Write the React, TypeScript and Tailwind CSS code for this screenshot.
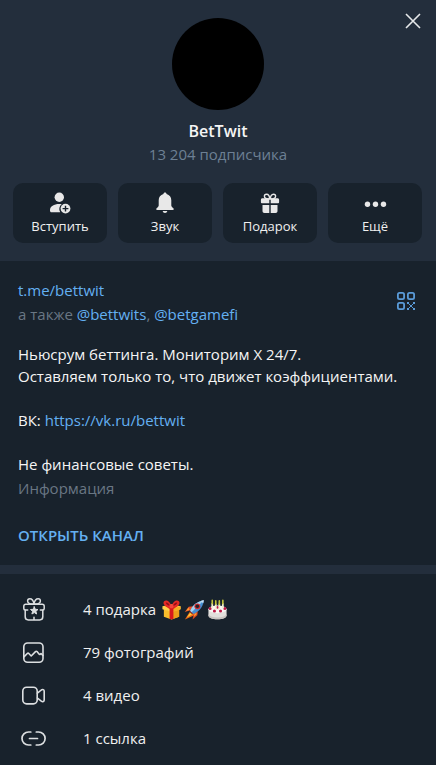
import type { ReactNode } from "react";

type Action = {
  label: string;
  icon: ReactNode;
};

type MediaRow = {
  label: string;
  icon: ReactNode;
  extra?: ReactNode;
};

function CloseIcon() {
  return (
    <svg width="16" height="16" viewBox="0 0 16 16" fill="none" stroke="#e6e8ea" strokeWidth="1.6" aria-hidden="true">
      <path d="M1 1 15 15M15 1 1 15" />
    </svg>
  );
}

function JoinIcon() {
  return (
    <svg width="24" height="24" viewBox="0 0 24 24" fill="#e8e8e8" aria-hidden="true">
      <circle cx="11.3" cy="6.3" r="4.7" />
      <path d="M2 19.8v-.8c0-3.7 4-6.1 9.2-6.1.9 0 1.700.05 2.500.2a6.200 6.200 0 0 0-1.500 8.200H3.500c-.9 0-1.500-.6-1.500-1.500Z" />
      <circle cx="17.500" cy="17.600" r="4.900" />
      <path d="M17.500 14.700v5.800M14.600 17.600h5.800" stroke="#18222c" strokeWidth="1.400" />
    </svg>
  );
}

function BellIcon() {
  return (
    <svg width="24" height="24" viewBox="0 0 24 24" fill="#e8e8e8" aria-hidden="true">
      <path d="M12 1.500c.9 0 1.500.6 1.600 1.500 2.900.8 4.700 3.200 4.700 6.200v5c0 1 .5 1.600 1.400 2.500l.6.600c.9.800.6 1.700-.6 1.700H4.300c-1.200 0-1.500-.9-.6-1.700l.6-.6c.9-.9 1.400-1.500 1.400-2.500v-5c0-3 1.800-5.400 4.700-6.200C10.500 2.100 11.100 1.500 12 1.500Z" />
      <path d="M9.700 20h4.600c-.2 1.200-1.100 2-2.300 2s-2.100-.8-2.300-2Z" />
    </svg>
  );
}

function GiftIcon() {
  return (
    <svg width="24" height="24" viewBox="0 0 24 24" fill="#e8e8e8" aria-hidden="true">
      <path
        d="M11.600 8C8 8 6.400 6.700 6.400 5.200c0-1.200.9-2 2.100-2 1.700 0 3.100 1.800 3.100 4.800Zm.8 0c3.600 0 5.200-1.300 5.200-2.800 0-1.200-.9-2-2.100-2-1.700 0-3.100 1.800-3.100 4.800Z"
        fill="none"
        stroke="#e8e8e8"
        strokeWidth="1.400"
      />
      <path d="M4.500 7.200h6.800v5H3.800c-.6 0-.9-.4-.9-.9V8.800c0-1 .6-1.600 1.600-1.600ZM12.700 7.200h6.800c1 0 1.600.6 1.600 1.600v2.500c0 .5-.3.900-.9.900h-7.500v-5Z" />
      <path d="M4.500 14h6.800v8H6.400c-1.200 0-1.900-.7-1.900-1.900V14ZM12.700 14h6.800v6.100c0 1.200-.7 1.900-1.900 1.900h-4.900v-8Z" />
    </svg>
  );
}

function MoreIcon() {
  return (
    <svg width="24" height="24" viewBox="0 0 24 24" fill="#e8e8e8" aria-hidden="true">
      <circle cx="4.500" cy="13.300" r="2.700" />
      <circle cx="12.500" cy="13.300" r="2.700" />
      <circle cx="20.500" cy="13.300" r="2.700" />
    </svg>
  );
}

function QrIcon() {
  return (
    <svg width="18" height="18" viewBox="0 0 18 18" fill="none" stroke="#5a9bd8" strokeWidth="1.800" aria-hidden="true">
      <rect x="0.900" y="0.900" width="6.200" height="6.200" rx="1.600" />
      <rect x="10.900" y="0.900" width="6.200" height="6.200" rx="1.600" />
      <rect x="0.900" y="10.900" width="6.200" height="6.200" rx="1.600" />
      <g fill="#5a9bd8" stroke="none">
        <rect x="10" y="10" width="2" height="2" />
        <rect x="16" y="10" width="2" height="2" />
        <rect x="12" y="12" width="1" height="1" />
        <rect x="15" y="12" width="1" height="1" />
        <rect x="13" y="13" width="2" height="2" />
        <rect x="12" y="15" width="1" height="1" />
        <rect x="15" y="15" width="1" height="1" />
        <rect x="10" y="16" width="2" height="2" />
        <rect x="16" y="16" width="2" height="2" />
      </g>
    </svg>
  );
}

function GiftStarIcon() {
  return (
    <svg width="27" height="27" viewBox="0 -1 27 27" fill="none" stroke="#dcdfe1" strokeWidth="1.500" strokeLinecap="round" strokeLinejoin="round" aria-hidden="true">
      <path d="M12.700 7C8.600 7.300 6.600 6 6.600 4c0-1.400 1-2.200 2.200-2.200C11 1.800 12.500 4 13 7c.5-3 2-5.200 4.200-5.200 1.200 0 2.200.8 2.200 2.200 0 2-2 3.300-6.100 3" />
      <path d="M6.700 13H4.300c-1 0-1.500-.6-1.500-1.500V9.300C2.800 8 3.500 7.200 4.800 7.200h16.400c1.300 0 2 .8 2 2.100v2.200c0 .9-.5 1.500-1.500 1.500h-2.400" />
      <path d="M4.200 13.200v6.600c0 2 1.100 3.100 3.100 3.100h11.400c2 0 3.100-1.100 3.100-3.100v-6.600M13 20.200v2.500" />
      <path d="m13.300 9.800 1 2.500 2.700.2-2.100 1.800.7 2.700-2.300-1.400-2.400 1.400.7-2.700-2.100-1.800 2.700-.2Z" fill="#dcdfe1" strokeWidth="1" />
    </svg>
  );
}

function PhotoIcon() {
  return (
    <svg width="27" height="27" viewBox="0 -1 27 27" fill="none" stroke="#dcdfe1" strokeWidth="1.600" strokeLinecap="round" strokeLinejoin="round" aria-hidden="true">
      <rect x="2.800" y="3" width="19.200" height="19.200" rx="3.800" />
      <path d="m3.200 16.600 3.100-3.100c.5-.5 1-.5 1.500 0l2.400 2.500 4.300-4.400c.5-.5 1-.5 1.500 0l2 2.400c.4.500.9.500 1.400.1l.6-.6 1.900 2" />
    </svg>
  );
}

function VideoIcon() {
  return (
    <svg width="27" height="27" viewBox="0 -1 27 27" fill="none" stroke="#dcdfe1" strokeWidth="1.600" strokeLinecap="round" strokeLinejoin="round" aria-hidden="true">
      <rect x="1.800" y="4.300" width="14.400" height="16.600" rx="3.800" />
      <path d="m16.400 10.200 3.900-3.200c1.400-1 2.900-.4 2.900 1.200v8.800c0 1.600-1.500 2.200-2.900 1.200l-3.900-3.200" />
    </svg>
  );
}

function LinkIcon() {
  return (
    <svg width="27" height="27" viewBox="0 -1 27 27" fill="none" stroke="#dcdfe1" strokeWidth="1.700" strokeLinecap="round" aria-hidden="true">
      <path d="M9.800 6H7.500a6.500 6.500 0 0 0 0 13h2.300M15.300 6h2.300a6.500 6.500 0 0 1 0 13h-2.300M8.500 12.500h8" />
    </svg>
  );
}

function GiftEmoji() {
  return (
    <svg width="21" height="21" viewBox="0 0 22 22" aria-hidden="true">
      <path d="M3 10.500 11 13l8-2.500v8L11 21.500l-8-3Z" fill="#f9bd2c" />
      <path d="m11 13 8-2.500v8l-8 3Z" fill="#ee9f19" />
      <path d="m1.500 7.500 9.500-2 9.500 2v3.200L11 13.500l-9.500-2.800Z" fill="#ffd04a" />
      <path d="m11 10.300 9.500-2.800v3.200L11 13.500Z" fill="#f5ab22" />
      <path d="M9 9.500h4v11.300l-2 .7-2-.7Z" fill="#d81a1c" />
      <path d="m3.800 7.200 3-.8 4.700 3-2.500 1.200ZM18.200 7.200l-3-.8-4.700 3 2.500 1.200Z" fill="#e12620" />
      <path d="M11 8.500C7.500 9 2.800 7.500 2.600 4.200c-.1-2.400 2-3.300 4.200-2.400C9 2.700 10.600 5.500 11 8.500Z" fill="#e52a25" />
      <path d="M11 8.500c3.500.5 8.200-1 8.400-4.300.1-2.400-2-3.300-4.200-2.400C13 2.700 11.400 5.500 11 8.500Z" fill="#e52a25" />
      <path d="M5 3.700c1.800-.4 3.600 1.200 4.500 3.300C7.500 7 5 5.800 5 3.700ZM17 3.700c-1.800-.4-3.600 1.200-4.500 3.300 2 0 4.500-1.200 4.500-3.300Z" fill="#930d18" />
      <rect x="9" y="5.600" width="4" height="4" rx="1.500" fill="#f4453c" />
    </svg>
  );
}

function RocketEmoji() {
  return (
    <svg width="21" height="21" viewBox="0 0 22 22" aria-hidden="true">
      <path d="M7.500 11 1 21.500l11-5Z" fill="#f36a16" />
      <path d="M7 13.500 3 19.500l6.500-4Z" fill="#ffd235" />
      <path d="M9.800 7.500 5 8 .8 13.500l6-1.700Z" fill="#e5512b" />
      <path d="M14.500 12.200 14 17l-5 4.500 1.200-6.200Z" fill="#d9481f" />
      <path d="m4.700 9-2.500 3.200 3.600-.8ZM13.200 14.500l-.4 2-2.400 2 .6-3Z" fill="#ff9c2d" />
      <path d="M6.500 12.500C8.500 7.500 12 3 20.800 1.200 19.700 9.500 15 13.500 9.700 15.600Z" fill="#468fd3" />
      <path d="M6.500 12.500C8.500 7.500 12 3 20.800 1.200L8 14Z" fill="#a5d2f0" />
      <path d="M17.500 2c1-.4 2.100-.6 3.300-.8-.1 1.200-.4 2.300-.7 3.300Z" fill="#c9dff0" />
      <circle cx="14" cy="7.700" r="3.100" fill="#d52c2c" />
      <circle cx="14" cy="7.700" r="1.900" fill="#20242f" />
      <path d="m6.500 12.500 3.200 3.100-1.300.5-2.500-2.300Z" fill="#7c2530" />
    </svg>
  );
}

function CakeEmoji() {
  return (
    <svg width="21" height="21" viewBox="0 0 22 22" aria-hidden="true">
      <path d="M1.500 11v6c0 2.700 4 4.300 9.500 4.300s9.500-1.600 9.500-4.300v-6Z" fill="#e2dfdc" />
      <ellipse cx="11" cy="10.800" rx="9.500" ry="4" fill="#f9f7f4" />
      <path d="M1.500 16c1.800 2.300 5 3.300 9.500 3.300s7.700-1 9.500-3.300v1c0 2.700-4 4.300-9.500 4.300S1.500 19.700 1.500 17Z" fill="#c8c3c0" />
      <g fill="#bd1745">
        <circle cx="3.300" cy="10" r="1.600" />
        <circle cx="7.800" cy="12.500" r="1.600" />
        <circle cx="14.200" cy="12.500" r="1.600" />
        <circle cx="18.700" cy="10" r="1.600" />
        <circle cx="11" cy="8.800" r="1.500" />
      </g>
      <path d="M5.500 4.500v5.500M9.200 5v6.500M12.900 5v6.500M16.600 4.500v5.500" stroke="#f3efd0" strokeWidth="1.800" />
      <path d="M5.500 1.500v3.500M9.200 2v3.500M12.900 2v3.500M16.600 1.500v3.500" stroke="#c3c53c" strokeWidth="1.700" strokeLinecap="round" />
    </svg>
  );
}

const actions: Action[] = [
  { label: "Вступить", icon: <JoinIcon /> },
  { label: "Звук", icon: <BellIcon /> },
  { label: "Подарок", icon: <GiftIcon /> },
  { label: "Ещё", icon: <MoreIcon /> },
];

const mediaRows: MediaRow[] = [
  {
    label: "4 подарка",
    icon: <GiftStarIcon />,
    extra: (
      <span className="ml-[5px] flex gap-0.5">
        <GiftEmoji />
        <RocketEmoji />
        <CakeEmoji />
      </span>
    ),
  },
  { label: "79 фотографий", icon: <PhotoIcon /> },
  { label: "4 видео", icon: <VideoIcon /> },
  { label: "1 ссылка", icon: <LinkIcon /> },
];

function TextLink({ href, children }: { href: string; children: ReactNode }) {
  return (
    <a href={href} className="text-[#64b0f2] hover:underline">
      {children}
    </a>
  );
}

function ProfileHeader() {
  return (
    <header className="relative bg-[#232e3c] px-[13px] py-[18px]">
      <button type="button" aria-label="Закрыть" className="absolute top-[9px] right-[11px] flex size-6 items-center justify-center">
        <CloseIcon />
      </button>

      <div className="flex flex-col items-center">
        <div className="size-[92px] rounded-full bg-black" />
        <h1 className="mt-2.5 text-[16px] leading-[22px] font-semibold text-[#f5f5f5]">BetTwit</h1>
        <p className="mt-px text-[15px] leading-[22px] text-[#6d8094]">13 204 подписчика</p>
      </div>

      <div className="mt-[18px] mr-px grid grid-cols-4 gap-[11px]">
        {actions.map((action) => (
          <button
            key={action.label}
            type="button"
            className="flex h-[60px] flex-col items-center rounded-[10px] bg-[#18222c] pt-2 text-[13px] leading-[22px] text-[#f0f0f0]"
          >
            {action.icon}
            {action.label}
          </button>
        ))}
      </div>
    </header>
  );
}

function ChannelInfo() {
  return (
    <section className="px-[18px] pt-[18px] pb-[19px] text-[15px] leading-[22px]">
      <div className="flex items-center justify-between">
        <div className="flex flex-col gap-0.5 text-[#6a7784]">
          <p>
            <TextLink href="#bettwit">t.me/bettwit</TextLink>
          </p>
          <p>
            а также <TextLink href="#bettwits">@bettwits</TextLink>, <TextLink href="#betgamefi">@betgamefi</TextLink>
          </p>
        </div>
        <button type="button" aria-label="QR-код" className="pr-[3px] pb-0.5">
          <QrIcon />
        </button>
      </div>

      <div className="mt-[18px] text-[#f5f5f5]">
        <p>
          Ньюсрум беттинга. Мониторим X 24/7.
          <br />
          Оставляем только то, что движет коэффициентами.
        </p>
        <p className="mt-[22px]">
          ВК: <TextLink href="#vk">https://vk.ru/bettwit</TextLink>
        </p>
        <p className="mt-[22px]">Не финансовые советы.</p>
      </div>
      <p className="mt-0.5 text-[#6a7784]">Информация</p>

      <button type="button" className="mt-[25px] block font-semibold text-[#64b0f2]">
        ОТКРЫТЬ КАНАЛ
      </button>
    </section>
  );
}

export default function App() {
  return (
    <main className="min-h-screen bg-[#18222c] font-['Open_Sans',sans-serif]">
      <ProfileHeader />
      <ChannelInfo />

      <section className="border-t-[9px] border-[#232e3c] pt-3.5">
        {mediaRows.map((row) => (
          <button
            key={row.label}
            type="button"
            className="flex h-[43px] w-full items-center pl-[21px] text-[15px] leading-[22px] text-[#f0f0f0]"
          >
            {row.icon}
            <span className="ml-[35px] pb-px">{row.label}</span>
            {row.extra}
          </button>
        ))}
      </section>
    </main>
  );
}
